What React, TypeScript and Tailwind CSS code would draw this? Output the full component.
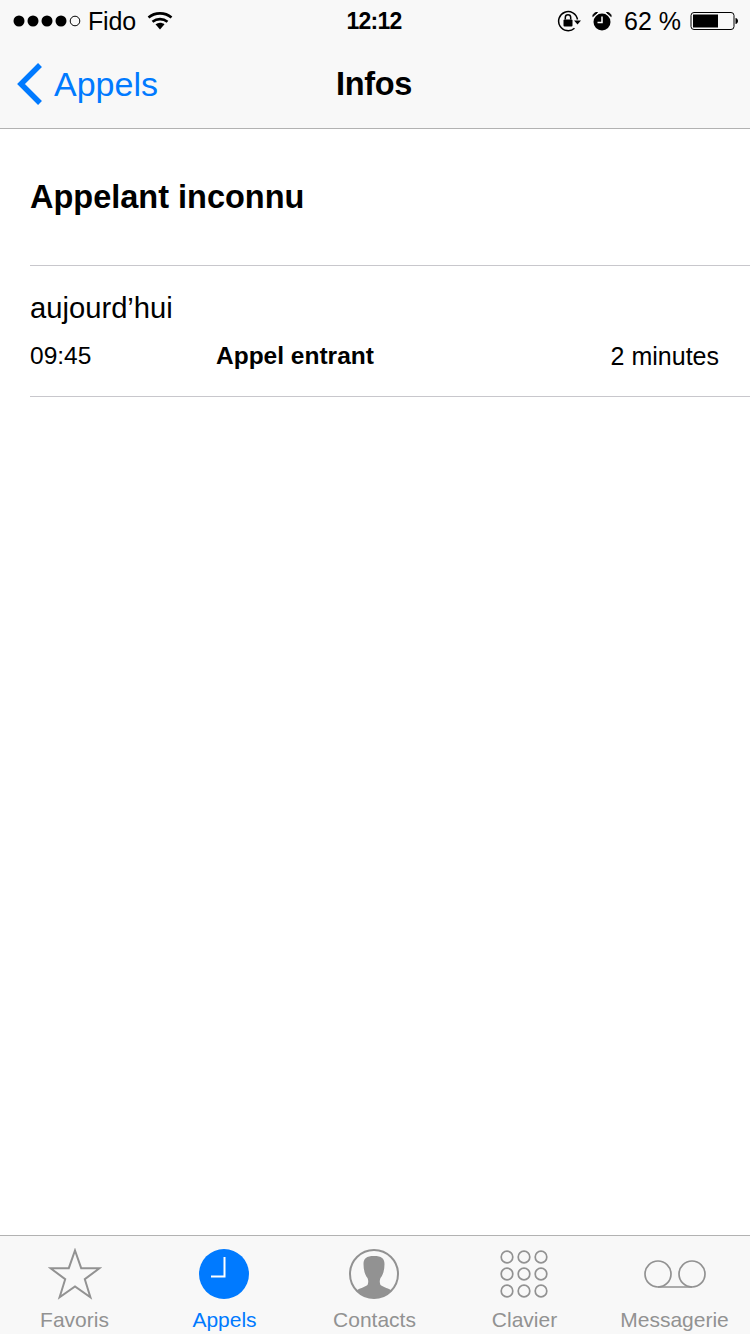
import React from "react";

const font = { fontFamily: '"Liberation Sans", Arial, sans-serif' };

function Signal() {
  return (
    <svg width="68" height="14" viewBox="0 0 68 14" className="block">
      {[6, 20, 34, 48].map((x) => (
        <circle key={x} cx={x} cy="7" r="5.5" fill="#000" />
      ))}
      <circle cx="62" cy="7" r="4.8" fill="none" stroke="#000" strokeWidth="1" />
    </svg>
  );
}

function Wifi() {
  return (
    <svg width="26" height="20" viewBox="0 0 26 20" className="block">
      <path d="M1.500 6.500C8 1 18 1 24.500 6.500" fill="none" stroke="#000" strokeWidth="2.6" />
      <path d="M5.500 10.800C10 7.200 16 7.200 20.500 10.800" fill="none" stroke="#000" strokeWidth="2.6" />
      <path d="M8.500 13.200C11.300 11.200 14.700 11.200 17.500 13.200L13 18.500Z" fill="#000" />
    </svg>
  );
}

function RotationLock() {
  return (
    <svg width="24" height="22" viewBox="0 0 24 22" className="block">
      <path d="M20.500 9.500A9.500 9.500 0 1 0 17.500 18.200" fill="none" stroke="#000" strokeWidth="1.5" />
      <path d="M17 10.500H24L20.500 14.500Z" fill="#000" />
      <rect x="6.500" y="9.500" width="9" height="7" rx="1" fill="#000" />
      <path d="M8.300 9.500V7.500A2.700 2.700 0 0 1 13.700 7.500V9.500" fill="none" stroke="#000" strokeWidth="1.5" />
    </svg>
  );
}

function Alarm() {
  return (
    <svg width="20" height="20" viewBox="0 0 20 20" className="block">
      <circle cx="10" cy="11" r="8.500" fill="#000" />
      <path d="M0.800 5.500A4 4 0 0 1 5.500 1.500ZM14.500 1.500A4 4 0 0 1 19.200 5.500Z" fill="#000" stroke="#000" strokeWidth="1" />
      <path d="M10 5.500V11.500H5.500" fill="none" stroke="#fff" strokeWidth="1.500" />
    </svg>
  );
}

function Battery() {
  return (
    <svg width="48" height="20" viewBox="0 0 48 20" className="block">
      <rect x="1" y="1.500" width="43" height="17" rx="3" fill="none" stroke="#000" strokeWidth="1" />
      <rect x="3" y="3.500" width="25" height="13" fill="#000" />
      <path d="M45.500 7C47 7.200 48 8.500 48 10C48 11.500 47 12.800 45.500 13Z" fill="#000" />
    </svg>
  );
}

function Star() {
  return (
    <svg width="54" height="52" viewBox="0 0 54 52">
      <path d="M27 2.500L33.200 20.200H51.500L36.800 31.200L42.400 49.200L27 38.500L11.600 49.200L17.200 31.200L2.500 20.200H20.800Z" fill="none" stroke="#929292" strokeWidth="2" />
    </svg>
  );
}

function Clock() {
  return (
    <svg width="50" height="50" viewBox="0 0 50 50" className="mr-[1px]">
      <circle cx="25" cy="25" r="25" fill="#007aff" />
      <path d="M25.500 8V27.500H12" fill="none" stroke="#fff" strokeWidth="2" />
    </svg>
  );
}

function Person() {
  return (
    <svg width="50" height="50" viewBox="0 0 50 50" className="mr-[1px]">
      <defs>
        <clipPath id="c">
          <circle cx="25" cy="25" r="24" />
        </clipPath>
      </defs>
      <circle cx="25" cy="25" r="24" fill="none" stroke="#929292" strokeWidth="2" />
      <path
        clipPath="url(#c)"
        d="M25 7C17.500 7 14.500 9.500 14.500 15C14.500 21 16 26 18.500 29C19.500 31 19.500 34 18.500 36C15.500 38.500 10 39 6.500 42.500V50H43.500V42.500C40 39 34.500 38.500 31.500 36C30.500 34 30.500 31 31.500 29C34 26 35.500 21 35.500 15C35.500 9.500 32.500 7 25 7Z"
        fill="#929292"
      />
    </svg>
  );
}

function Keypad() {
  const pos = [8, 25, 42];
  return (
    <svg width="50" height="50" viewBox="0 0 50 50" className="mr-[1px]">
      {pos.map((y) =>
        pos.map((x) => (
          <circle key={`${x}-${y}`} cx={x} cy={y} r="5.800" fill="none" stroke="#929292" strokeWidth="1.700" />
        ))
      )}
    </svg>
  );
}

function Voicemail() {
  return (
    <svg width="64" height="30" viewBox="0 0 64 30">
      <circle cx="15" cy="15" r="13" fill="none" stroke="#929292" strokeWidth="1.700" />
      <circle cx="49" cy="15" r="13" fill="none" stroke="#929292" strokeWidth="1.700" />
      <path d="M15 28H49" stroke="#929292" strokeWidth="1.700" />
    </svg>
  );
}

function Tab({ icon, label, active }: { icon: React.ReactNode; label: string; active?: boolean }) {
  return (
    <div className="flex flex-col items-center w-[150px] pr-[1px]">
      <div className="h-[50px] flex items-center justify-center">{icon}</div>
      <div className={`mt-[9px] text-[21px] leading-[24px] ${active ? "text-[#007aff]" : "text-[#929292]"}`}>{label}</div>
    </div>
  );
}

export default function App() {
  return (
    <div style={font} className="w-[750px] h-[1334px] bg-white flex flex-col overflow-hidden text-black">
      <header className="h-[129px] shrink-0 bg-[#f8f8f8] border-b border-[#b2b2b2] flex flex-col">
        <div className="h-[40px] flex items-center justify-between pl-[13px] pr-[12px] pt-[1px]">
          <div className="w-[250px] flex items-center">
            <Signal />
            <span className="ml-[7px] text-[25px] leading-[28px] tracking-[-0.2px]">Fido</span>
            <span className="ml-[11px]"><Wifi /></span>
          </div>
          <div className="text-[23px] leading-[28px] font-bold tracking-[-0.8px] mr-[3px]">12:12</div>
          <div className="w-[250px] flex items-center justify-end">
            <RotationLock />
            <span className="ml-[11px]"><Alarm /></span>
            <span className="ml-[12px] text-[25px] leading-[28px]">62 %</span>
            <span className="ml-[9px]"><Battery /></span>
          </div>
        </div>
        <div className="flex-1 flex items-center justify-between pl-[16px]">
          <div className="w-[250px] flex items-center">
            <svg width="26" height="42" viewBox="0 0 26 42" className="block">
              <path d="M24 2L5 21L24 40" fill="none" stroke="#007aff" strokeWidth="5.5" />
            </svg>
            <span className="ml-[12px] text-[34px] leading-[40px] text-[#007aff]">Appels</span>
          </div>
          <div className="text-[32.5px] leading-[40px] font-bold tracking-[-0.3px]">Infos</div>
          <div className="w-[268px]" />
        </div>
      </header>

      <main className="flex-1 pl-[30px]">
        <div className="h-[137px] border-b border-[#c8c7cc] flex items-center pb-[1px]">
          <h1 className="text-[32.5px] leading-[40px] font-bold">Appelant inconnu</h1>
        </div>
        <div className="h-[131px] border-b border-[#c8c7cc] pr-[31px]">
          <div className="pt-[25px] text-[29.2px] leading-[34px]">aujourd’hui</div>
          <div className="mt-[17px] flex items-center text-[24.5px] leading-[28px]">
            <span className="w-[186px]">09:45</span>
            <span className="font-bold">Appel entrant</span>
            <span className="ml-auto text-[25px]">2 minutes</span>
          </div>
        </div>
      </main>

      <nav className="h-[99px] shrink-0 bg-[#f8f8f8] border-t border-[#b2b2b2] flex pt-[13px]">
        <Tab icon={<Star />} label="Favoris" />
        <Tab icon={<Clock />} label="Appels" active />
        <Tab icon={<Person />} label="Contacts" />
        <Tab icon={<Keypad />} label="Clavier" />
        <Tab icon={<Voicemail />} label="Messagerie" />
      </nav>
    </div>
  );
}
